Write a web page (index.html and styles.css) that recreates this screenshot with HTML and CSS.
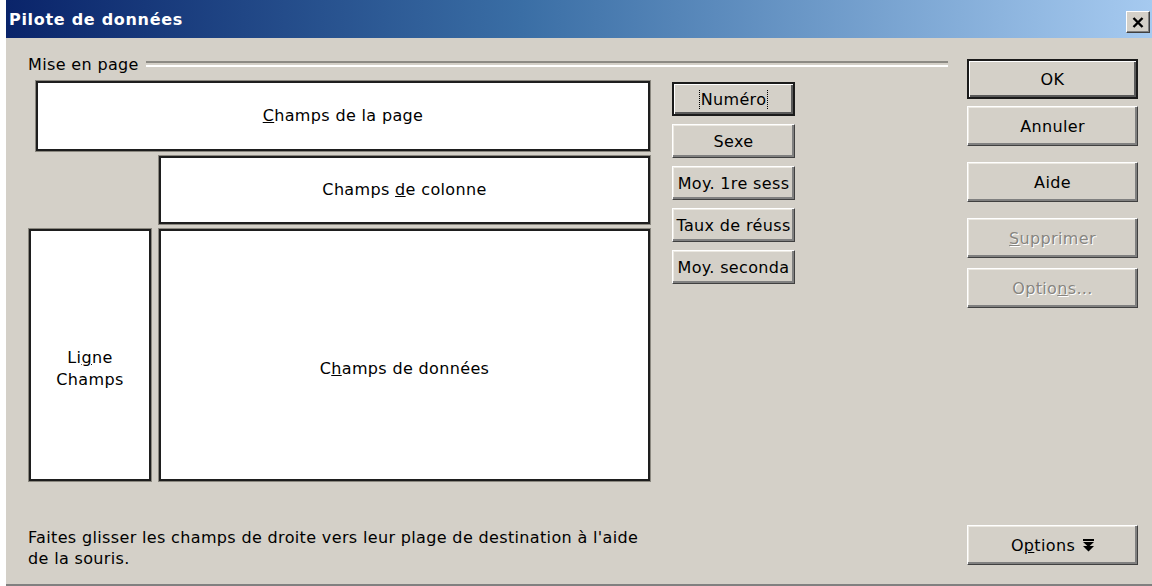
FILE: index.html
```html
<!DOCTYPE html>
<html lang="fr">
<head>
<meta charset="utf-8">
<title>Pilote de données</title>
<link rel="stylesheet" href="styles.css">
</head>
<body>
<div class="window">
  <div class="titlebar">
    <span class="title">Pilote de données</span>
    <button class="close-btn" type="button" aria-label="Fermer">
      <svg width="12" height="11" viewBox="0 0 12 11"><path d="M1.5 1 L10.5 10 M10.5 1 L1.5 10" stroke="#000" stroke-width="2.4" fill="none"/></svg>
    </button>
  </div>

  <div class="client">
    <div class="main">
      <div class="group-head">
        <span class="group-label">Mise en page</span>
        <span class="etch"></span>
      </div>

      <div class="layout-row">
        <div class="drop-grid">
          <div class="drop page-area"><span><u>C</u>hamps de la page</span></div>
          <div class="drop col-area"><span>Champs <u>d</u>e colonne</span></div>
          <div class="drop row-area tall"><span>Li<u>g</u>ne<br>Champs</span></div>
          <div class="drop data-area tall"><span>C<u>h</u>amps de données</span></div>
        </div>

        <!-- field names are shown shortened to the button width -->
        <div class="field-list">
          <button class="btn field default" type="button"><span class="lbl"><span class="focus">Numéro</span></span></button>
          <button class="btn field" type="button"><span class="lbl">Sexe</span></button>
          <button class="btn field" type="button" title="Moy. 1re session"><span class="lbl">Moy. 1re sess</span></button>
          <button class="btn field" type="button" title="Taux de réussite"><span class="lbl">Taux de réuss</span></button>
          <button class="btn field" type="button" title="Moy. secondaire"><span class="lbl">Moy. seconda</span></button>
        </div>
      </div>

      <p class="hint">Faites glisser les champs de droite vers leur plage de destination à l'aide<br>de la souris.</p>
    </div>

    <div class="side">
      <button class="btn action default" type="button">OK</button>
      <button class="btn action" type="button">Annuler</button>
      <button class="btn action spaced" type="button">Aide</button>
      <button class="btn action spaced disabled" type="button"><u>S</u>upprimer</button>
      <button class="btn action near disabled" type="button">Optio<u>n</u>s...</button>
      <button class="btn action more" type="button">
        <span>O<u>p</u>tions</span>
        <svg class="more-icon" width="11" height="13" viewBox="0 0 11 13"><path d="M0 0 H11 V2 H0 Z M0 3 H11 L5.5 8 Z M0 7 H11 L5.5 12.5 Z" fill="#000"/></svg>
      </button>
    </div>
  </div>
</div>
</body>
</html>
```

FILE: styles.css
```css
html, body {
  margin: 0;
  padding: 0;
  background: #ffffff;
}

body {
  font-family: "DejaVu Sans", Verdana, sans-serif;
  font-size: 16px;
  letter-spacing: 0.35px;
  color: #000;
}

.window {
  margin-left: 6px;
  width: 1146px;
  height: 586px;
  background: #d4d0c8;
  display: flex;
  flex-direction: column;
  box-sizing: border-box;
  border-bottom: 2px solid #808080;
}

/* Caption bar */
.titlebar {
  height: 38px;
  flex: none;
  display: flex;
  align-items: center;
  justify-content: space-between;
  padding: 0 2px 0 3px;
  background: linear-gradient(to right, #0a246a 0%, #3a6ea5 45%, #a6caf0 100%);
  box-sizing: border-box;
}

.title {
  color: #fff;
  font-weight: bold;
  font-size: 16px;
  letter-spacing: 0.7px;
}

.close-btn {
  width: 24px;
  height: 22px;
  margin-top: 6px;
  padding: 0;
  display: flex;
  align-items: center;
  justify-content: center;
  background: #d4d0c8;
  border: 1px solid;
  border-color: #fff #404040 #404040 #fff;
  box-shadow: inset -1px -1px #808080;
}

/* Client area */
.client {
  flex: 1;
  display: flex;
  padding: 18px 14px 15px 22px;
  gap: 19px;
  min-height: 0;
}

.main {
  width: 920px;
  display: flex;
  flex-direction: column;
}

.group-head {
  display: flex;
  align-items: center;
  height: 18px;
  gap: 7px;
}

.group-label {
  white-space: nowrap;
  line-height: 18px;
}

.etch {
  flex: 1;
  height: 2px;
  border-top: 2px solid #8c8a84;
  border-bottom: 2px solid #fff;
  margin-top: -3px;
}

.layout-row {
  display: flex;
  gap: 22px;
  margin-top: 7px;
}

.drop-grid {
  display: grid;
  grid-template-columns: 122px 491px;
  grid-template-rows: 70px 68px 252px;
  column-gap: 8px;
  row-gap: 5px;
  margin-left: 1px;
}

.drop {
  background: #fff;
  border: 2px solid #1e1e1e;
  box-shadow: 0 0 0 1px #8a877f;
  box-sizing: border-box;
  display: flex;
  align-items: center;
  justify-content: center;
  text-align: center;
  line-height: 22px;
}

.drop.tall {
  padding-top: 28px;
}

.page-area {
  grid-column: 1 / 3;
  margin-left: 7px;
}

.col-area {
  grid-column: 2;
}

.row-area {
  grid-column: 1;
  grid-row: 3;
}

.data-area {
  grid-column: 2;
  grid-row: 3;
}

/* Push buttons */
.btn {
  font: inherit;
  letter-spacing: inherit;
  color: #000;
  background: #d4d0c8;
  border: 1px solid;
  border-color: #fff #404040 #404040 #fff;
  box-shadow: inset -2px -2px #808080, inset 1px 1px #ece9e2;
  box-sizing: border-box;
  padding: 0 2px;
  white-space: nowrap;
  overflow: hidden;
  text-align: center;
}

.btn.default {
  border: 2px solid #1a1a1a;
  box-shadow: inset 1px 1px #fff, inset -2px -2px #5a5a5a;
}

.field-list {
  display: flex;
  flex-direction: column;
  gap: 8px;
  margin-top: 1px;
}

.btn.field {
  width: 123px;
  height: 34px;
  display: block;
  padding: 0 1px;
}

.lbl {
  display: block;
  overflow: hidden;
  text-align: center;
  white-space: nowrap;
}

.focus {
  display: inline-block;
  outline: 1px dotted #000;
  outline-offset: 0;
  padding: 0 1px;
  line-height: 21px;
}

.side {
  width: 171px;
  display: flex;
  flex-direction: column;
  padding-top: 3px;
  padding-bottom: 4px;
}

.btn.action {
  width: 171px;
  height: 40px;
  flex: none;
  margin-bottom: 7px;
}

.btn.action.spaced {
  margin-top: 9px;
}

.btn.action.near {
  margin-top: 3px;
}

.btn.disabled {
  color: #878580;
  text-shadow: 1px 1px #fff;
}

.btn.more {
  margin-top: auto;
  margin-bottom: 0;
  display: flex;
  align-items: center;
  justify-content: center;
  gap: 8px;
}

.more-icon {
  margin-top: 1px;
}

.hint {
  margin: auto 0 0;
  line-height: 21px;
}
```
